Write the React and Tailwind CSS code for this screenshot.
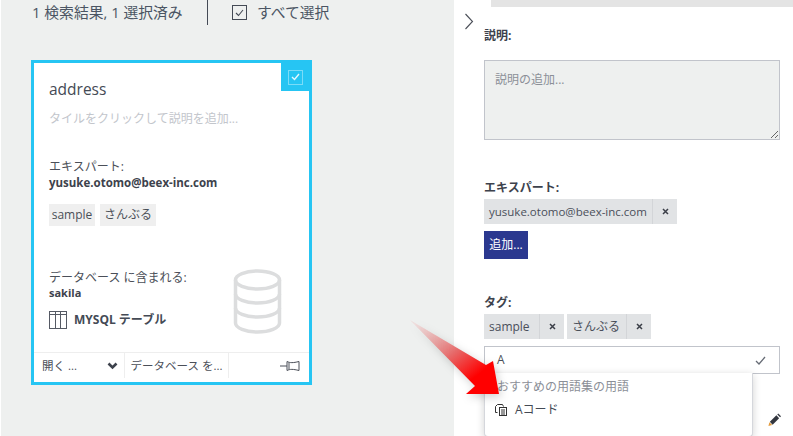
const jp = { fontFamily: '"Open Sans","Noto Sans CJK JP",sans-serif' };

function Chip({ label, w, xw = 25, small }) {
  return (
    <div className="flex h-[25px] items-center bg-[#e1e3e5] text-[#4a4f5a]">
      <span className={small ? "flex h-full items-center whitespace-nowrap pl-[5px] text-[11.5px]" : "flex h-full items-center whitespace-nowrap pl-[5px] text-[12px]"} style={{ width: w }}>{label}</span>
      <span className="flex h-full items-center justify-center border-l border-[#d3d5d8] text-[#3b3f48]" style={{ width: xw }}>
        <svg width="7" height="7" viewBox="0 0 7 7"><path d="M1 1l5 5M6 1L1 6" stroke="currentColor" strokeWidth="1.5" /></svg>
      </span>
    </div>
  );
}

export default function App() {
  return (
    <div className="relative flex h-[436px] w-[793px] overflow-hidden bg-white text-[#444a55]" style={jp}>
      {/* Left results area */}
      <div className="ml-px flex w-[453px] shrink-0 flex-col bg-[#eef0ef]">
        <div className="flex h-[25px] items-center pl-[31px] text-[14.8px] text-[#4b5563]">
          <span className="w-[175px] whitespace-nowrap leading-none">1 検索結果, 1 選択済み</span>
          <span className="h-[25px] w-px bg-[#444a55]" />
          <span className="ml-[24px] flex h-[15px] w-[15px] items-center justify-center border border-[#444a55]">
            <svg width="9" height="8" viewBox="0 0 9 8"><path d="M1 4l2.500 2.500L8 1" fill="none" stroke="#444a55" strokeWidth="1.1" /></svg>
          </span>
          <span className="ml-[10px] whitespace-nowrap leading-none">すべて選択</span>
        </div>

        <div className="relative ml-[30px] mt-[35px] flex h-[325px] w-[281px] flex-col border-[3px] border-[#26c5f3] bg-white">
          <div className="absolute right-0 top-0 flex h-[28px] w-[28px] items-center justify-center bg-[#26c5f3]">
            <span className="flex h-[15px] w-[15px] items-center justify-center border border-[#7adcf8]">
              <svg width="9" height="8" viewBox="0 0 9 8"><path d="M1 4l2.500 2.500L8 1" fill="none" stroke="#e6f8fe" strokeWidth="1.4" /></svg>
            </span>
          </div>
          <div className="flex flex-1 flex-col pl-[15px]">
            <div className="mt-[14px] h-[24px] text-[15.5px] leading-[24px] text-[#444a55]">address</div>
            <div className="mt-[8px] h-[20px] text-[12px] leading-[20px] text-[#c3c6cc]">タイルをクリックして説明を追加...</div>
            <div className="mt-[30px] h-[16px] text-[12px] leading-[16px] text-[#4b4f58]">エキスパート:</div>
            <div className="h-[15px] whitespace-nowrap text-[11.5px] font-bold leading-[15px] text-[#3d424c]">yusuke.otomo@beex-inc.com</div>
            <div className="mt-[14px] flex gap-[5px] text-[12px] text-[#4b4f58]">
              <span className="flex h-[22px] w-[46px] items-center justify-center bg-[#efefef]">sample</span>
              <span className="flex h-[22px] w-[56px] items-center justify-center bg-[#efefef]">さんぶる</span>
            </div>
            <div className="relative mt-[44px] flex-1">
              <div className="h-[15px] text-[12px] leading-[15px] text-[#4b4f58]">データベース に含まれる:</div>
              <div className="h-[15px] text-[11px] font-bold leading-[15px] text-[#3d424c]">sakila</div>
              <div className="mt-[11px] flex items-center gap-[7px]">
                <svg width="18" height="18" viewBox="0 0 18 18" fill="none" stroke="#555a64">
                  <rect x="0.500" y="0.500" width="17" height="17" />
                  <path d="M0.500 3.500h17M6.500 .5v17M11.500 .5v17" />
                </svg>
                <span className="text-[12px] font-bold text-[#444a55]">MYSQL テーブル</span>
              </div>
              <svg className="absolute left-[184px] top-[-1px]" width="49" height="65" viewBox="0 0 49 65" fill="none" stroke="#dcddde" strokeWidth="3.500">
                <ellipse cx="24.500" cy="11" rx="22" ry="9" />
                <path d="M2.500 11v43c0 5 10 9 22 9s22-4 22-9V11" />
                <path d="M2.500 25c0 5 10 9 22 9s22-4 22-9M2.500 39c0 5 10 9 22 9s22-4 22-9" />
              </svg>
            </div>
          </div>
          <div className="flex h-[30px] border-t border-[#eeeeee] text-[11.5px] text-[#4b4f58]">
            <div className="flex h-[25px] w-[91px] items-center justify-between border-r border-[#eeeeee] pl-[8px] pr-[6px]">
              <span>開く ...</span>
              <svg width="11" height="8" viewBox="0 0 11 8"><path d="M1.500 1.500l4 4 4-4" fill="none" stroke="#3d424c" strokeWidth="2.600" /></svg>
            </div>
            <div className="flex h-[25px] w-[104px] items-center justify-center border-r border-[#eeeeee]">データベース を...</div>
            <div className="flex h-[25px] flex-1 items-center justify-end pr-[9px]">
              <svg width="20" height="12" viewBox="0 0 20 12" fill="none" stroke="#4b4f58">
                <path d="M0 6h7M7 1.500c3 1.500 6 1.500 12 0v9c-6-1.500-9-1.500-12 0z" />
                <path d="M9 2.500v7" />
              </svg>
            </div>
          </div>
        </div>
      </div>

      {/* Right details panel */}
      <div className="relative flex-1 bg-white">
        <div className="ml-[37px] h-[7px] bg-[#e4e4e4]" />
        <svg className="absolute left-[10px] top-[13px]" width="10" height="17" viewBox="0 0 10 17" fill="none" stroke="#4b4f58" strokeWidth="1.1"><path d="M1.500 1l7 7.500-7 7.500" /></svg>
        <div className="ml-[30px] w-[296px]">
          <div className="mt-[21px] h-[16px] text-[12px] font-bold leading-[16px] text-[#3d424c]">説明:</div>
          <div className="mt-[16px] relative h-[80px] border border-[#c1c4cb] bg-[#eef0ef] px-[10px] pt-[10px] text-[12px] leading-[18px] text-[#8b8f97]">
            説明の追加...
            <svg className="absolute bottom-0 right-0" width="9" height="9" viewBox="0 0 9 9" stroke="#666"><path d="M1 8l7-7M5 8l3-3" /></svg>
          </div>
          <div className="mt-[40px] h-[16px] text-[12px] font-bold leading-[16px] text-[#3d424c]">エキスパート:</div>
          <div className="mt-[3px] flex"><Chip label="yusuke.otomo@beex-inc.com" w={168} small /></div>
          <div className="mt-[7px] flex h-[28px] w-[44px] items-center justify-center bg-[#2b388f] text-[12px] text-white">追加...</div>
          <div className="mt-[36px] h-[16px] text-[12px] font-bold leading-[16px] text-[#3d424c]">タグ:</div>
          <div className="mt-[3px] flex gap-[3px]">
            <Chip label="sample" w={55} />
            <Chip label="さんぶる" w={59} />
          </div>
          <div className="mt-[7px] flex h-[28px] items-center justify-between border border-[#c1c4cb] pl-[12px] pr-[13px] text-[12px] text-[#4b4f58]">
            <span>A</span>
            <svg width="11" height="9" viewBox="0 0 11 9"><path d="M1 5l3 3 6-7" fill="none" stroke="#666b75" strokeWidth="1.3" /></svg>
          </div>
        </div>
        <svg className="absolute left-[314px] top-[413px]" width="13" height="14" viewBox="0 0 14 14">
          <path d="M0.500 13.500l1-4 3 3z" fill="#e49a3a" />
          <path d="M2 9l7-7 3 3-7 7z" fill="#33373f" />
          <path d="M10 1l1-1 3 3-1 1z" fill="#33373f" />
        </svg>
      </div>

      {/* Suggestion popover */}
      <div className="absolute left-[484px] top-[373px] h-[64px] w-[269px] rounded-b-[4px] border border-t-0 border-[#d5d7dc] bg-white pl-[10px] shadow-[0_2px_8px_rgba(0,0,0,0.18)]">
        <div className="mt-[5px] h-[18px] pl-[2px] text-[12px] leading-[18px] text-[#8b8f97]">おすすめの用語集の用語</div>
        <div className="mt-[5px] flex h-[18px] items-center gap-[8px] text-[12px] text-[#444a55]">
          <svg width="12" height="12" viewBox="0 0 12 12" fill="none" stroke="#333"><path d="M2.500 8.500h-2v-6l2-2h5l1 2" /><rect x="4.500" y="3.500" width="7" height="8" fill="#fff" /><path d="M6 6h4M6 8h4M6 10h4" /></svg>
          <span>Aコード</span>
        </div>
      </div>

      {/* Red annotation arrow */}
      <svg className="absolute left-[400px] top-[310px] drop-shadow-[2px_3px_4px_rgba(0,0,0,0.18)]" width="115" height="100" viewBox="0 0 115 100">
        <defs>
          <linearGradient id="ar" x1="0.05" y1="0.05" x2="0.85" y2="0.9">
            <stop offset="0" stopColor="#eeb0b0" stopOpacity="0.3" />
            <stop offset="0.5" stopColor="#e66a6a" />
            <stop offset="0.85" stopColor="#ff0000" />
          </linearGradient>
        </defs>
        <path d="M10 10L86 55l7-4 6 33-33 0 9-8z" fill="url(#ar)" />
      </svg>
    </div>
  );
}
